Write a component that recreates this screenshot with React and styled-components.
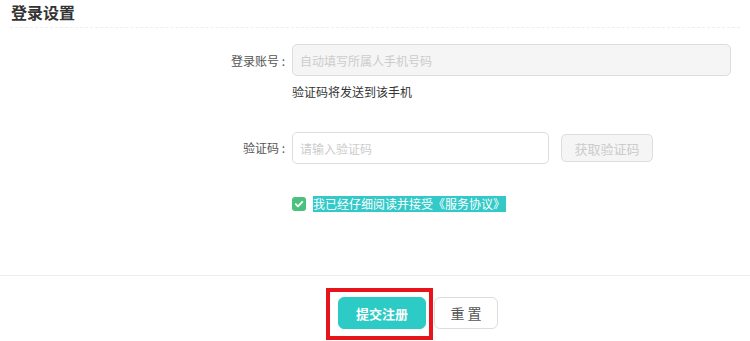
import React from "react";
import styled, { createGlobalStyle } from "styled-components";

const GlobalStyle = createGlobalStyle`
  body {
    margin: 0;
    background: #fff;
    font-family: "Noto Sans CJK SC", "Noto Sans", sans-serif;
    color: #333;
  }
`;

const Page = styled.div`
  width: 750px;
  height: 341px;
  overflow: hidden;
`;

const Header = styled.div`
  margin: 0 10px;
  height: 27px;
  border-bottom: 1px dashed #eee;
  padding-left: 1px;
`;

const Title = styled.h2`
  margin: 0;
  font-size: 16px;
  font-weight: bold;
  line-height: 27px;
  color: #333;
  position: relative;
  top: -1px;
`;

const Form = styled.div`
  height: 248px;
  padding-top: 16px;
  box-sizing: border-box;
  border-bottom: 1px solid #eee;
`;

const Row = styled.div`
  display: flex;
  align-items: ${(p) => p.align || "center"};
  margin-top: ${(p) => p.top || 0}px;
`;

const Label = styled.label`
  flex: none;
  text-align: right;
  padding-right: 7px;
  box-sizing: content-box;
  width: 285px;
  font-size: 12px;
  line-height: ${(p) => p.lh || "normal"};
  color: #555;
`;

const Indent = styled.div`
  width: 292px;
  flex: none;
`;

const Input = styled.input`
  width: ${(p) => p.w}px;
  height: 32px;
  box-sizing: border-box;
  border: 1px solid #ddd;
  border-radius: 5px;
  background: ${(p) => (p.disabled ? "#f5f5f5" : "#fff")};
  padding: 0 7px;
  font-family: inherit;
  font-size: 12px;
  outline: none;
  &::placeholder {
    color: #ccc;
  }
`;

const Hint = styled.div`
  font-size: 12px;
  color: #333;
  line-height: 14px;
`;

const CodeButton = styled.button`
  margin-left: 12px;
  width: 92px;
  height: 28px;
  margin-top: 2px;
  border: 1px solid #ddd;
  border-radius: 5px;
  background: #f5f5f5;
  color: #ccc;
  font-family: inherit;
  font-size: 13px;
  padding: 0;
`;

const Check = styled.span`
  width: 14px;
  height: 14px;
  border-radius: 3px;
  background: #4ac27d;
  display: inline-flex;
  align-items: center;
  justify-content: center;
  flex: none;
`;

const Agree = styled.span`
  margin-left: 7px;
  background: #33c9c8;
  color: #fff;
  font-size: 12px;
  line-height: 16px;
  padding-right: 1px;
`;

const Footer = styled.div`
  display: flex;
  align-items: flex-start;
  padding-top: 12px;
  padding-left: 326px;
`;

const Highlight = styled.div`
  border: 4px solid #e8141c;
  padding: 5px 3px 7px 8px;
  display: flex;
`;

const Button = styled.button`
  height: 32px;
  box-sizing: border-box;
  border-radius: 6px;
  font-family: inherit;
  padding: 0;
  cursor: pointer;
  width: ${(p) => p.w}px;
  background: ${(p) => (p.primary ? "#2ccbc6" : "#fff")};
  border: 1px solid ${(p) => (p.primary ? "#2ccbc6" : "#ddd")};
  color: ${(p) => (p.primary ? "#fff" : "#555")};
  font-size: ${(p) => (p.primary ? 13 : 14)}px;
  font-weight: ${(p) => (p.primary ? "bold" : "normal")};
`;

const ResetWrap = styled.div`
  margin-left: 1px;
  margin-top: 9px;
`;

export default function App() {
  return (
    <Page>
      <GlobalStyle />
      <Header>
        <Title>登录设置</Title>
      </Header>
      <Form>
        <Row>
          <Label>登录账号 :</Label>
          <Input w={439} disabled placeholder="自动填写所属人手机号码" />
        </Row>
        <Row top={9}>
          <Indent />
          <Hint>验证码将发送到该手机</Hint>
        </Row>
        <Row top={33} align="flex-start">
          <Label lh="32px">验证码 :</Label>
          <Input w={257} placeholder="请输入验证码" />
          <CodeButton>获取验证码</CodeButton>
        </Row>
        <Row top={32}>
          <Indent />
          <Check>
            <svg width="10" height="10" viewBox="0 0 10 10">
              <path d="M1.8 5.2 L4 7.3 L8.3 2.8" fill="none" stroke="#fff" strokeWidth="1.8" strokeLinecap="round" strokeLinejoin="round" />
            </svg>
          </Check>
          <Agree>我已经仔细阅读并接受《服务协议》</Agree>
        </Row>
      </Form>
      <Footer>
        <Highlight>
          <Button primary w={88}>提交注册</Button>
        </Highlight>
        <ResetWrap>
          <Button w={64}>重 置</Button>
        </ResetWrap>
      </Footer>
    </Page>
  );
}
